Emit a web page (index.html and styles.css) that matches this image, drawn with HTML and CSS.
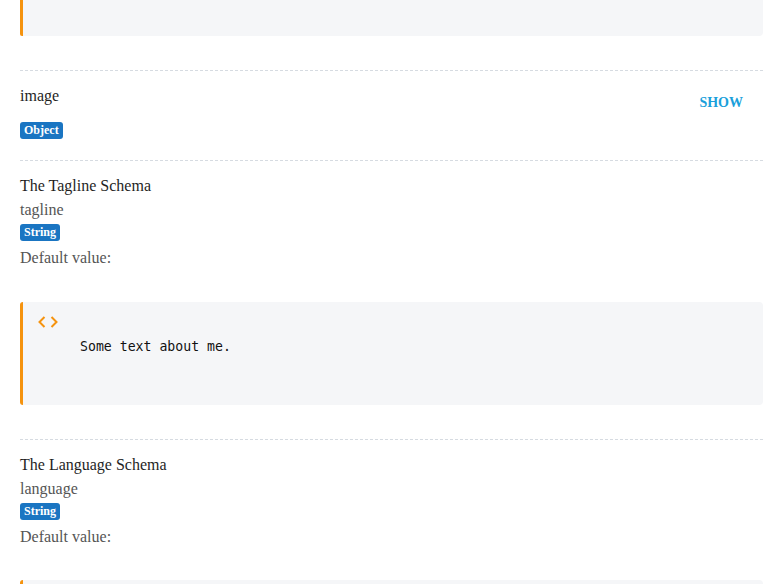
FILE: index.html
```html
<!DOCTYPE html>
<html>
<head>
<meta charset="utf-8">
<link rel="stylesheet" href="styles.css">
</head>
<body>
<div class="page">
  <div class="code code-tail"></div>

  <div class="prop">
    <div class="prop-row">
      <div class="prop-main">
        <div class="title">image</div>
        <div class="badge-row badge-row-gap"><span class="badge">Object</span></div>
      </div>
      <div class="show">SHOW</div>
    </div>
  </div>

  <div class="prop">
    <div class="title">The Tagline Schema</div>
    <div class="name">tagline</div>
    <div class="badge-row"><span class="badge">String</span></div>
    <div class="name">Default value:</div>
    <div class="code code-full">
      <svg class="code-icon" width="20" height="12" viewBox="0 0 20 12" aria-hidden="true">
        <path d="M6.5 1 L1.5 6 L6.5 11" fill="none" stroke="#f5930f" stroke-width="2"/>
        <path d="M13.5 1 L18.5 6 L13.5 11" fill="none" stroke="#f5930f" stroke-width="2"/>
      </svg>
      <pre class="code-text">Some text about me.</pre>
    </div>
  </div>

  <div class="prop">
    <div class="title">The Language Schema</div>
    <div class="name">language</div>
    <div class="badge-row"><span class="badge">String</span></div>
    <div class="name">Default value:</div>
    <div class="code code-last"></div>
  </div>
</div>
</body>
</html>
```

FILE: styles.css
```css
html, body {
  margin: 0;
  padding: 0;
  background: #ffffff;
  overflow: hidden;
}

body {
  font-family: "Liberation Serif", "Times New Roman", serif;
  font-size: 16px;
  color: #222222;
}

.page {
  width: 743px;
  height: 584px;
  overflow: hidden;
  padding-left: 20px;
}

.code {
  background: #f5f6f8;
  border-left: 3px solid #f5930f;
  border-radius: 3px 4px 4px 3px;
  box-sizing: border-box;
}

.code-tail {
  height: 36px;
  border-radius: 0 0 4px 2px;
  margin-bottom: 34px;
}

.code-full {
  height: 103px;
  margin-top: 32px;
  margin-bottom: 34px;
  padding: 14px 15px 0 15px;
}

.code-last {
  height: 40px;
  margin-top: 31px;
}

.code-icon {
  display: block;
}

.code-text {
  margin: 11px 0 0 42px;
  font-family: "DejaVu Sans Mono", "Liberation Mono", monospace;
  font-size: 13.2px;
  line-height: 16px;
  color: #111111;
}

.prop {
  border-top: 1px dashed #d6dbe1;
  padding-top: 13px;
}

.prop-row {
  display: flex;
  justify-content: space-between;
  align-items: flex-start;
  padding-bottom: 21px;
}

.title {
  line-height: 24px;
  color: #1f1f1f;
}

.name {
  line-height: 24px;
  color: #555555;
}

.badge-row {
  display: flex;
  margin: 2px 0 5px;
}

.badge-row-gap {
  margin: 14px 0 0;
}

.badge {
  display: inline-block;
  background: #1a75c2;
  color: #ffffff;
  font-weight: bold;
  font-size: 12px;
  line-height: 16px;
  padding: 0 4px 1px;
  border-radius: 3px;
}

.show {
  margin-top: 11px;
  margin-right: 20px;
  font-weight: bold;
  font-size: 14px;
  line-height: 16px;
  color: #1a9fdb;
}
```
